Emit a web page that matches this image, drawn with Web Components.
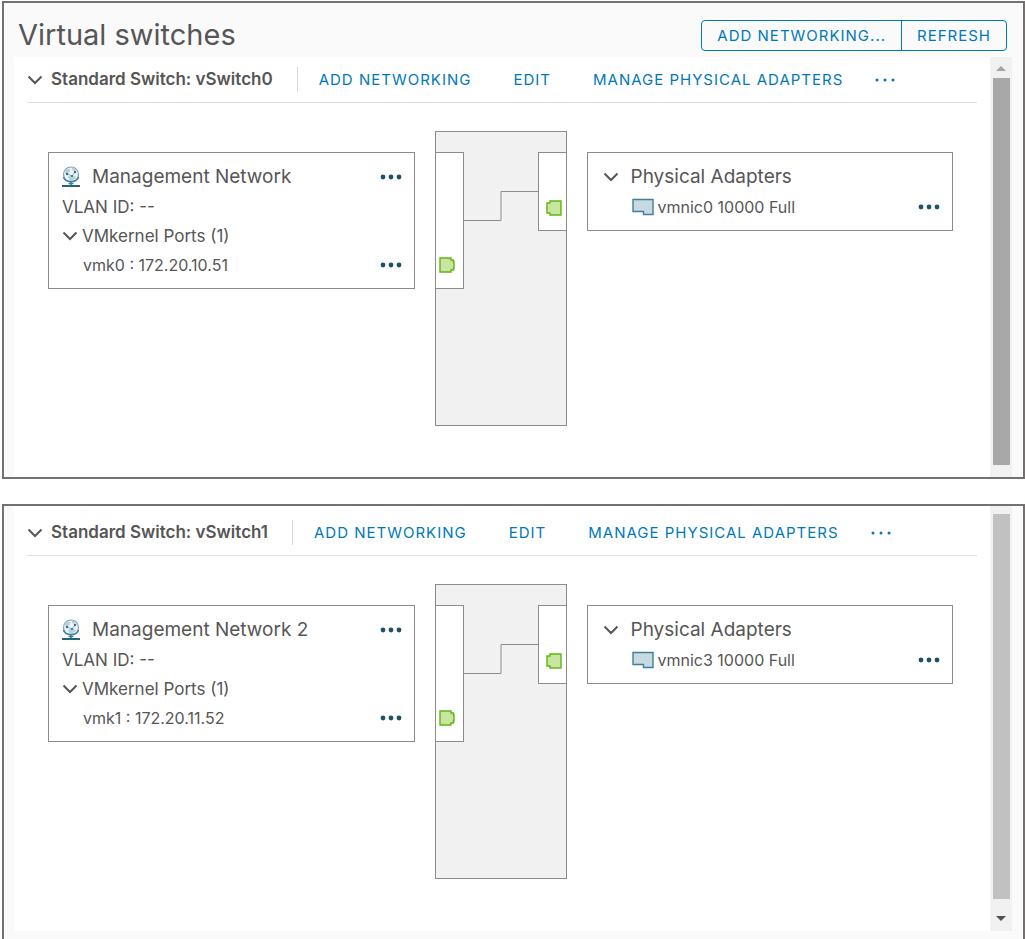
<!DOCTYPE html>
<html lang="en">
<head>
<meta charset="utf-8">
<meta name="viewport" content="width=device-width, initial-scale=1">
<title>Virtual switches</title>
<style>
  body {
    margin: 0;
    padding: 1px 0 0 2px;
    background: #fff;
    color: #565656;
    font: 17px/24px Inter, "Liberation Sans", sans-serif;
    --action-color: #0079b8;
    --menu-color: #1d5266;
    --line-color: #8c8c8c;
  }
</style>
</head>
<body>

<virtual-switches-panel>
  <panel-header slot="header" label="Virtual switches">
    <button-group></button-group>
  </panel-header>
  <virtual-switch name="vSwitch0" network="Management Network" vmk="vmk0 : 172.20.10.51" adapter="vmnic0 10000 Full"></virtual-switch>
  <scroll-rail slot="rail" arrow="up"></scroll-rail>
</virtual-switches-panel>

<virtual-switches-panel continued>
  <virtual-switch name="vSwitch1" network="Management Network 2" vmk="vmk1 : 172.20.11.52" adapter="vmnic3 10000 Full"></virtual-switch>
  <scroll-rail slot="rail" arrow="down"></scroll-rail>
</virtual-switches-panel>

<script>

/**
 *
 * @param {HTMLElement} element
 * @param {string} html
 * @returns {ShadowRoot}
 */
const render = (element, html) => {
  const shadowRoot = element.shadowRoot || element.attachShadow({mode: 'open'});
  shadowRoot.innerHTML = html;
  return shadowRoot;
};

/**
 * SwitchIcon
 *  - Element: switch-icon
 *  - Description: Inline icons, by name
 */
class SwitchIcon extends HTMLElement {

  /**
   * @type {Object}
   */
  static ICONS = {
    'chevron': {size: [16, 16], body: `<path d="M1.500 4.500 8 11l6.500-6.500" fill="none" stroke="#565656" stroke-width="2"/>`},
    'network': {size: [18, 22], body: `
      <circle cx="9" cy="8.500" r="7.500" fill="#eef4f7" stroke="#7ba6bb" stroke-width="1.200"/>
      <path d="M3 4.500l3-2 2.500 1-1 2.500-3.500 2.500zM10 1.500l3.500 1.500-1 2-2.500-1zM6 11l3-2 4 1 1 2-4 2.500-3-1z" fill="#b9cfda"/>
      <path d="M5.500 8l4.500 2 3-4" fill="none" stroke="#8fb3c4"/>
      <circle cx="5" cy="8" r="1.200" fill="#2f6c88"/><circle cx="13" cy="6" r="1.200" fill="#2f6c88"/>
      <circle cx="10" cy="10" r="1" fill="#2f6c88"/>
      <path d="M1.500 11c1.500 6 13.500 6 15 0" fill="none" stroke="#3d7f9e" stroke-width="1.400"/>
      <path d="M9 15.500V20M6.500 17.500h5" stroke="#3d7f9e" stroke-width="1.600"/><path d="M0 20h18" stroke="#25607c" stroke-width="2"/>`},
    'nic': {size: [22, 18], body: `<path d="M1 1.500h20v15h-9.500v-3H1z" fill="#c9d9e1" stroke="#3f7f9b" stroke-width="1.400"/>`},
    'port-left': {size: [16, 16], body: `<path d="M1 1h11v2h2.500v2H15v6h-.500v2H12v2H1z" fill="#c8e6a0" stroke="#60b515" stroke-width="1.400"/>`},
    'port-right': {size: [16, 16], body: `<path d="M15 1H4v2H1v10h3v2h11z" fill="#c8e6a0" stroke="#60b515" stroke-width="1.400"/>`},
    'menu': {size: [22, 6], body: `<g fill="currentColor"><circle cx="3" cy="3" r="2.400"/><circle cx="11" cy="3" r="2.400"/><circle cx="19" cy="3" r="2.400"/></g>`},
    'menu-small': {size: [20, 4], body: `<g fill="currentColor"><circle cx="2" cy="2" r="1.500"/><circle cx="10" cy="2" r="1.500"/><circle cx="18" cy="2" r="1.500"/></g>`},
    'up': {size: [10, 6], body: `<path d="M0 6 5 1l5 5z" fill="#a3a3a3"/>`},
    'down': {size: [10, 6], body: `<path d="M0 0 5 5l5-5z" fill="#505050"/>`}
  };

  connectedCallback() {
    const {size: [width, height], body} = SwitchIcon.ICONS[this.getAttribute('name')];
    render(this, `
      <style>
        :host { display: inline-flex; flex: none; }
      </style>
      <svg width="${ width }" height="${ height }" viewBox="0 0 ${ width } ${ height }" aria-hidden="true">${ body }</svg>
    `);
  }

}

/**
 * IconButton
 *  - Element: icon-button
 *  - Description: Borderless button around one icon
 */
class IconButton extends HTMLElement {

  connectedCallback() {
    render(this, `
      <style>
        :host { display: inline-flex; flex: none; color: var(--menu-color); }
        button {
          display: flex;
          align-items: center;
          padding: 0;
          border: 0;
          background: none;
          color: inherit;
          cursor: pointer;
        }
      </style>
      <button type="button" aria-label="${ this.getAttribute('label') }">
        <switch-icon name="${ this.getAttribute('icon') }"></switch-icon>
      </button>
    `);
  }

}

/**
 * ButtonGroup
 *  - Element: button-group
 *  - Description: Outlined actions of the panel header
 */
class ButtonGroup extends HTMLElement {

  connectedCallback() {
    render(this, `
      <style>
        :host {
          display: flex;
          border: 1px solid var(--action-color);
          border-radius: 4px;
        }
        button {
          padding: 0 15px;
          border: 0;
          background: none;
          color: var(--action-color);
          font: inherit;
          font-size: 15px;
          line-height: 29px;
          letter-spacing: 1px;
          cursor: pointer;
        }
        button + button { border-left: 1px solid var(--action-color); }
      </style>
      <button type="button">ADD NETWORKING...</button>
      <button type="button">REFRESH</button>
    `);
  }

}

/**
 * PanelHeader
 *  - Element: panel-header
 */
class PanelHeader extends HTMLElement {

  connectedCallback() {
    render(this, `
      <style>
        :host {
          display: flex;
          align-items: center;
          justify-content: space-between;
          height: 54px;
          padding: 10px 16px 0 14px;
          box-sizing: border-box;
        }
        h1 { margin: 0; font-size: 29px; font-weight: 400; line-height: 40px; }
      </style>
      <h1>${ this.getAttribute('label') }</h1>
      <slot></slot>
    `);
  }

}

/**
 * ScrollRail
 *  - Element: scroll-rail
 *  - Description: Track with a thumb and one arrow
 */
class ScrollRail extends HTMLElement {

  connectedCallback() {
    const arrow = this.getAttribute('arrow');
    render(this, `
      <style>
        :host {
          display: flex;
          flex-direction: column;
          align-items: center;
          width: 22px;
          box-sizing: border-box;
          background: #f1f1f1;
          padding-bottom: 12px;
        }
        :host([arrow="down"]) { flex-direction: column-reverse; padding: 8px 0 0; }
        .thumb { flex: 1; width: 17px; background: #a8a8a8; }
        :host([arrow="down"]) .thumb { background: #c1c1c1; }
        icon-button { height: 21px; }
        :host([arrow="down"]) icon-button { height: 24px; padding-top: 8px; }
      </style>
      <icon-button icon="${ arrow }" label="Scroll ${ arrow }"></icon-button>
      <div class="thumb"></div>
    `);
  }

}

/**
 * VirtualSwitchesPanel
 *  - Element: virtual-switches-panel
 *  - Description: Framed panel with its content and scroll rail
 */
class VirtualSwitchesPanel extends HTMLElement {

  connectedCallback() {
    render(this, `
      <style>
        :host {
          display: block;
          border: 2px solid #767171;
          background: #fafafa;
        }
        :host([continued]) { margin-top: 25px; border-bottom: 0; padding-bottom: 8px; }
        .body { display: flex; padding: 0 11px 0 10px; }
        .content { flex: 1; min-width: 0; background: #fff; }
        :host([continued]) .content { padding: 4px 0 1px; }
      </style>
      <slot name="header"></slot>
      <div class="body">
        <div class="content"><slot></slot></div>
        <slot name="rail"></slot>
      </div>
    `);
  }

}

/**
 * SwitchToolbar
 *  - Element: switch-toolbar
 *  - Description: Title of a switch and its actions
 */
class SwitchToolbar extends HTMLElement {

  connectedCallback() {
    render(this, `
      <style>
        :host {
          display: flex;
          align-items: center;
          height: 45px;
          border-bottom: 1px solid #dedede;
          white-space: nowrap;
        }
        h2 { margin: 0 24px 0 8px; padding-bottom: 2px; font-size: 17px; font-weight: 600; line-height: 24px; }
        .actions {
          display: flex;
          align-items: center;
          gap: 42px;
          height: 25px;
          padding-left: 21px;
          border-left: 1px solid #d8d8d8;
        }
        button {
          padding: 0;
          border: 0;
          background: none;
          color: var(--action-color);
          font: inherit;
          font-size: 15px;
          letter-spacing: 1px;
          cursor: pointer;
        }
        .actions icon-button { --menu-color: var(--action-color); margin-left: -10px; }
      </style>
      <icon-button icon="chevron" label="Collapse"></icon-button>
      <h2>Standard Switch: ${ this.getAttribute('name') }</h2>
      <div class="actions">
        <button type="button">ADD NETWORKING</button>
        <button type="button">EDIT</button>
        <button type="button">MANAGE PHYSICAL ADAPTERS</button>
        <icon-button icon="menu-small" label="More actions"></icon-button>
      </div>
    `);
  }

}

/**
 * SwitchCard
 *  - Element: switch-card
 *  - Description: Outlined box for rows of a port group or of adapters
 */
class SwitchCard extends HTMLElement {

  connectedCallback() {
    render(this, `
      <style>
        :host {
          display: block;
          padding: 9px 12px 9px 13px;
          border: 1px solid var(--line-color);
          background: #fff;
        }
      </style>
      <slot></slot>
    `);
  }

}

/**
 * CardRow
 *  - Element: card-row
 *  - Description: One line of a card, with an optional menu at its end
 */
class CardRow extends HTMLElement {

  connectedCallback() {
    render(this, `
      <style>
        :host {
          display: flex;
          align-items: center;
          height: 29px;
          white-space: nowrap;
        }
        :host([heading]) { height: 30px; font-size: 19px; }
        :host([detail]) { font-size: 16px; }
        :host([indent]) { padding-left: 21px; }
        .label { display: flex; flex: 1; align-items: center; gap: 4px; min-width: 0; }
        :host([heading]) .label { gap: 12px; }
      </style>
      <div class="label"><slot></slot></div>
      ${ this.hasAttribute('menu') ? '<icon-button icon="menu" label="Actions"></icon-button>' : '' }
    `);
  }

}

/**
 * SwitchBackplane
 *  - Element: switch-backplane
 *  - Description: Ports of both sides and the line between them
 */
class SwitchBackplane extends HTMLElement {

  connectedCallback() {
    render(this, `
      <style>
        :host {
          display: flex;
          align-items: flex-start;
          height: 295px;
          padding-top: 20px;
          box-sizing: border-box;
          border: 1px solid var(--line-color);
          background: #f1f1f1;
        }
        .ports {
          display: flex;
          align-items: flex-end;
          box-sizing: border-box;
          width: 28px;
          border: 1px solid var(--line-color);
          background: #fff;
        }
        .groups { height: 137px; padding: 0 0 15px 3px; border-left: 0; }
        .uplinks { height: 79px; padding: 0 0 14px 7px; border-right: 0; }
        .link { flex: 1; height: 79px; min-width: 0; }
      </style>
      <div class="ports groups"><switch-icon name="port-left"></switch-icon></div>
      <svg class="link" viewBox="0 0 75 79" preserveAspectRatio="none" aria-hidden="true">
        <path d="M0 68.500h37.500v-29H75" fill="none" stroke="#8c8c8c"/>
      </svg>
      <div class="ports uplinks"><switch-icon name="port-right"></switch-icon></div>
    `);
  }

}

/**
 * VirtualSwitch
 *  - Element: virtual-switch
 *  - Description: A standard switch with its port group and physical adapters
 */
class VirtualSwitch extends HTMLElement {

  connectedCallback() {
    render(this, `
      <style>
        :host { display: block; padding: 0 13px 51px; }
        .topology {
          display: grid;
          grid-template-columns: 1fr 132px 1fr;
          gap: 20px;
          align-items: start;
          padding: 28px 24px 0 21px;
        }
        switch-card { margin-top: 21px; }
        .adapters { padding-left: 2px; }
        .nic { padding-left: 31px; }
      </style>
      <switch-toolbar name="${ this.getAttribute('name') }"></switch-toolbar>
      <div class="topology">
        <switch-card>
          <card-row heading menu><switch-icon name="network"></switch-icon><span>${ this.getAttribute('network') }</span></card-row>
          <card-row>VLAN ID: --</card-row>
          <card-row><icon-button icon="chevron" label="Collapse ports"></icon-button><span>VMkernel Ports (1)</span></card-row>
          <card-row detail indent menu>${ this.getAttribute('vmk') }</card-row>
        </switch-card>
        <switch-backplane></switch-backplane>
        <switch-card>
          <card-row class="adapters" heading><icon-button icon="chevron" label="Collapse adapters"></icon-button><span>Physical Adapters</span></card-row>
          <card-row class="nic" detail menu><switch-icon name="nic"></switch-icon><span>${ this.getAttribute('adapter') }</span></card-row>
        </switch-card>
      </div>
    `);
  }

}

customElements.define('switch-icon', SwitchIcon);
customElements.define('icon-button', IconButton);
customElements.define('button-group', ButtonGroup);
customElements.define('panel-header', PanelHeader);
customElements.define('scroll-rail', ScrollRail);
customElements.define('switch-toolbar', SwitchToolbar);
customElements.define('switch-card', SwitchCard);
customElements.define('card-row', CardRow);
customElements.define('switch-backplane', SwitchBackplane);
customElements.define('virtual-switch', VirtualSwitch);
customElements.define('virtual-switches-panel', VirtualSwitchesPanel);

</script>
</body>
</html>
